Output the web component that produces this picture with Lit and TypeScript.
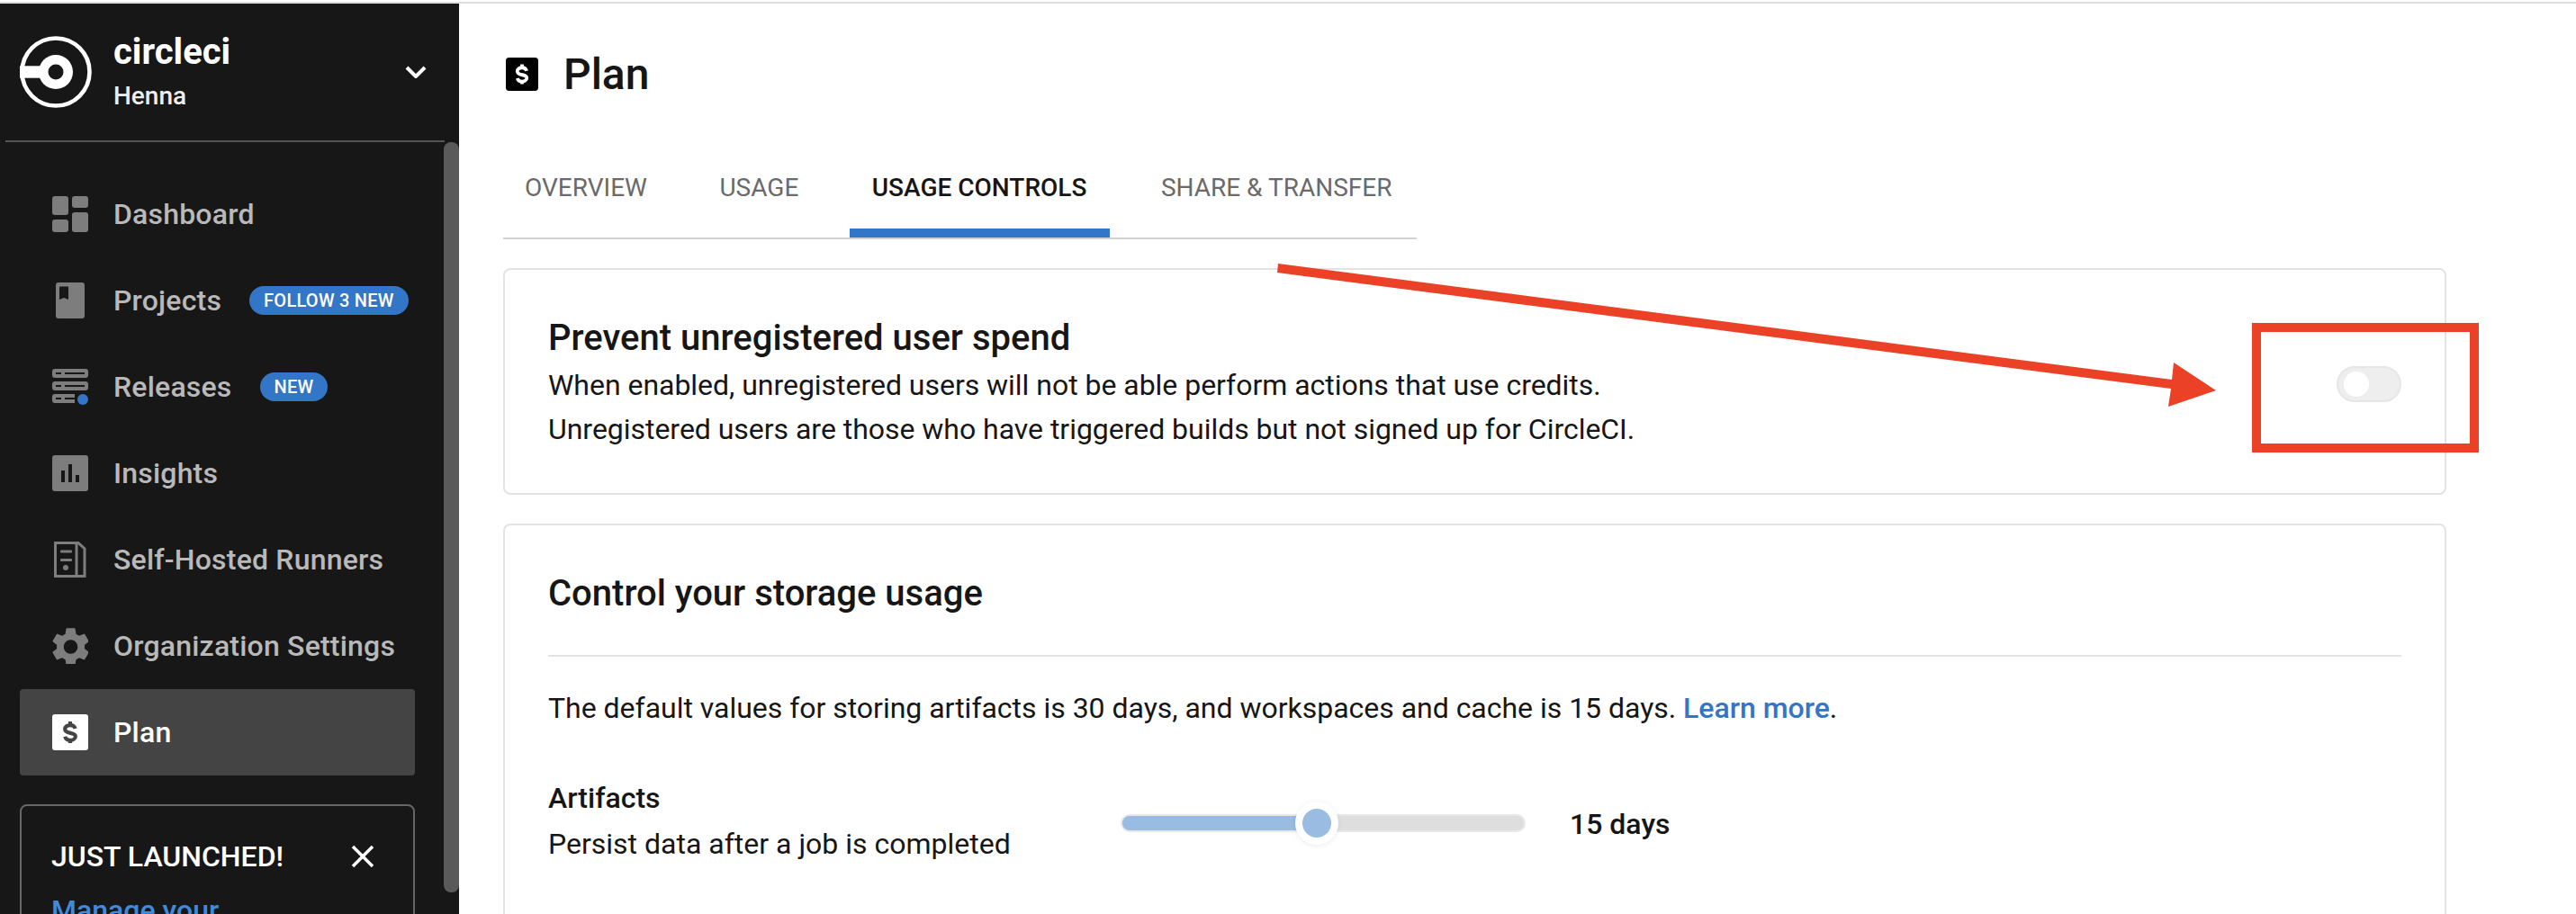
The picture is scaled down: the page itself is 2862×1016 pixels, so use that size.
import { LitElement, html, css, svg } from 'lit';
import { customElement } from 'lit/decorators.js';

const dollar = (color: string) => svg`
  <g transform="translate(2.800 2.400) scale(.86 .88)">
    <path d="M26.500 15.500c-.6-2.800-3.200-4.500-6.500-4.500-3.800 0-6.800 2-6.800 5 0 6.800 13.600 3.200 13.600 9 0 3-3 5-6.800 5-3.400 0-6-1.700-6.700-4.500"
      fill="none" stroke=${color} stroke-width="4.800" />
    <path d="M20 6.500v5M20 28.500v5" fill="none" stroke=${color} stroke-width="4.800" />
  </g>
`;

// 사이드바 아이콘 (40x40)
const icons: Record<string, unknown> = {
  dashboard: svg`
    <rect x="0" y="0" width="18" height="21" rx="3" />
    <rect x="22" y="0" width="18" height="13" rx="3" />
    <rect x="0" y="26" width="18" height="14" rx="3" />
    <rect x="22" y="18" width="18" height="22" rx="3" />`,
  projects: svg`
    <path fill-rule="evenodd" d="M7 0h26a3 3 0 0 1 3 3v34a3 3 0 0 1-3 3H7a3 3 0 0 1-3-3V3a3 3 0 0 1 3-3zM9 4.500a1 1 0 0 0-1 1V19l5-2 5 2V5.500a1 1 0 0 0-1-1z" />`,
  releases: svg`
    <path fill-rule="evenodd" d="M3 0h34a3 3 0 0 1 3 3v4a3 3 0 0 1-3 3H3a3 3 0 0 1-3-3V3a3 3 0 0 1 3-3zM4 4v2h6V4zM14 4v2h22V4z" />
    <path fill-rule="evenodd" d="M3 14h34a3 3 0 0 1 3 3v4a3 3 0 0 1-3 3H3a3 3 0 0 1-3-3v-4a3 3 0 0 1 3-3zM4 18v2h6v-2zM14 18v2h22v-2z" />
    <path fill-rule="evenodd" d="M3 28h22v10H3a3 3 0 0 1-3-3v-4a3 3 0 0 1 3-3zM4 32v2h6v-2zM14 32v2h11v-2z" />
    <circle cx="34" cy="34" r="6" fill="#3375c6" />`,
  insights: svg`
    <path fill-rule="evenodd" d="M3 0h34a3 3 0 0 1 3 3v34a3 3 0 0 1-3 3H3a3 3 0 0 1-3-3V3a3 3 0 0 1 3-3zM10 17v13h4V17zM18 10v20h4V10zM26 22v8h4v-8z" />`,
  runners: svg`
    <path d="M3.500 1.500H29l7 6.500v30.500H3.500zM27 1.500v37" fill="none" stroke="#7d7d7d" stroke-width="3" />
    <rect x="9" y="9.500" width="13" height="3" rx="1" />
    <rect x="9" y="19" width="13" height="3" rx="1" />
    <circle cx="15" cy="29" r="3" />`,
  settings: svg`
    <g transform="translate(-5.260 -4.800) scale(2.150 2.150)">
      <path d="M19.140 12.940c.04-.3.06-.61.06-.94 0-.32-.02-.64-.07-.94l2.030-1.580c.18-.14.23-.41.12-.61l-1.920-3.320c-.12-.22-.37-.29-.59-.22l-2.390.96c-.5-.38-1.030-.7-1.620-.94l-.36-2.540c-.04-.24-.24-.41-.48-.41h-3.840c-.24 0-.43.17-.47.41l-.36 2.540c-.59.24-1.130.57-1.620.94l-2.390-.96c-.22-.08-.47 0-.59.22L2.740 8.870c-.12.21-.08.47.12.61l2.030 1.580c-.05.3-.09.63-.09.94s.02.64.07.94l-2.030 1.580c-.18.14-.23.41-.12.61l1.920 3.320c.12.22.37.29.59.22l2.390-.96c.5.38 1.030.7 1.620.94l.36 2.540c.05.24.24.41.48.41h3.840c.24 0 .44-.17.47-.41l.36-2.540c.59-.24 1.130-.56 1.620-.94l2.390.96c.22.08.47 0 .59-.22l1.920-3.320c.12-.22.07-.47-.12-.61l-2.010-1.580zM12 15.600c-1.980 0-3.600-1.620-3.600-3.600s1.620-3.600 3.600-3.600 3.600 1.620 3.600 3.600-1.620 3.600-3.600 3.600z" />
    </g>`,
  plan: svg`
    <rect width="40" height="40" rx="3" fill="#fff" />
    ${dollar('#444')}`,
};

const navItems = [
  { icon: 'dashboard', label: 'Dashboard' },
  { icon: 'projects', label: 'Projects', badge: 'FOLLOW 3 NEW' },
  { icon: 'releases', label: 'Releases', badge: 'NEW' },
  { icon: 'insights', label: 'Insights' },
  { icon: 'runners', label: 'Self-Hosted Runners' },
  { icon: 'settings', label: 'Organization Settings' },
  { icon: 'plan', label: 'Plan', active: true },
];

const tabs = ['OVERVIEW', 'USAGE', 'USAGE CONTROLS', 'SHARE & TRANSFER'];

@customElement('app-root')
export class AppRoot extends LitElement {
  static styles = css`
    :host {
      display: block;
      position: relative;
      width: 2862px;
      height: 1016px;
      overflow: hidden;
      background: #fff;
      font-family: Roboto, sans-serif;
      color: #161616;
    }
    .topline {
      height: 2px;
      margin-top: 2px;
      background: #ddd;
    }
    .page {
      display: flex;
      height: 1012px;
    }

    /* 사이드바 */
    .sidebar {
      position: relative;
      flex: none;
      width: 510px;
      background: #171717;
      color: #fff;
    }
    .head {
      display: flex;
      align-items: center;
      height: 152px;
      padding: 0 36px 0 22px;
      box-sizing: border-box;
    }
    .logo {
      flex: none;
      width: 80px;
      height: 80px;
    }
    .org {
      margin-left: 25px;
      flex: 1;
    }
    .org-name {
      font-size: 40px;
      line-height: 48px;
      font-weight: 700;
      margin-top: -1px;
      margin-left: -1px;
    }
    .org-user {
      font-size: 28px;
      line-height: 36px;
      font-weight: 500;
      margin-top: 7px;
      margin-left: -1px;
      color: #eee;
    }
    .chevron {
      flex: none;
      width: 24px;
      height: 14px;
    }
    .rule {
      height: 2px;
      margin: 0 16px 0 6px;
      background: #555;
    }
    .scrollbar {
      position: absolute;
      left: 493px;
      top: 154px;
      width: 17px;
      height: 834px;
      border-radius: 8px;
      background: #5a5a5a;
    }
    nav {
      padding: 32px 49px 0 22px;
    }
    .item {
      display: flex;
      align-items: center;
      height: 96px;
      padding-left: 36px;
      border-radius: 4px;
      font-size: 32px;
      font-weight: 500;
      letter-spacing: 0.2px;
      color: #b9b9b9;
    }
    .item svg {
      flex: none;
      width: 40px;
      height: 40px;
      margin-right: 28px;
      fill: #7d7d7d;
    }
    .item.active {
      background: #444;
      color: #fff;
    }
    .badge {
      margin-left: 31px;
      height: 32px;
      padding: 0 16px;
      border-radius: 16px;
      background: #3375c6;
      color: #fff;
      font-size: 20px;
      line-height: 32px;
      letter-spacing: 0.25px;
      white-space: nowrap;
    }
    .notice {
      margin: 32px 49px 0 22px;
      height: 300px;
      padding: 38px 33px;
      box-sizing: border-box;
      border: 2px solid #666;
      border-radius: 8px;
    }
    .notice-head {
      display: flex;
      align-items: center;
      justify-content: space-between;
      padding-right: 10px;
      font-size: 32px;
      line-height: 36px;
      font-weight: 500;
    }
    .notice-head svg {
      width: 26px;
      height: 26px;
    }
    .notice-link {
      margin-top: 20px;
      font-size: 32px;
      line-height: 44px;
      font-weight: 500;
      color: #3f8adb;
    }

    /* 본문 */
    main {
      flex: 1;
      padding: 0 0 0 49px;
      min-width: 0;
    }
    .title {
      display: flex;
      align-items: center;
      gap: 28px;
      height: 150px;
      box-sizing: border-box;
      padding: 6px 0 0 3px;
      font-size: 48px;
      font-weight: 500;
    }
    .title svg {
      width: 36px;
      height: 37px;
    }
    .tabs {
      display: flex;
      gap: 32.500px;
      width: 1015px;
      border-bottom: 2px solid #d2d2d2;
    }
    .tab {
      display: flex;
      align-items: center;
      height: 110px;
      padding: 8px 24px 0;
      box-sizing: border-box;
      border-bottom: 10px solid transparent;
      font-size: 28px;
      color: #6a6a6a;
    }
    .tab.on {
      padding: 8px 26px 0 25px;
      border-bottom-color: #3375c6;
      color: #161616;
      font-weight: 500;
    }
    .card {
      width: 2159px;
      box-sizing: border-box;
      margin-top: 32px;
      border: 2px solid #e3e3e3;
      border-radius: 8px;
    }
    .spend {
      display: flex;
      align-items: center;
      justify-content: space-between;
      padding: 52px 48px 46px;
    }
    h2 {
      margin: 0;
      font-size: 40px;
      line-height: 48px;
      font-weight: 500;
    }
    .desc {
      margin-top: 4px;
      font-size: 32px;
      line-height: 49px;
      letter-spacing: -0.03px;
    }
    .toggle {
      display: flex;
      align-items: center;
      width: 72px;
      height: 40px;
      padding-left: 6px;
      box-sizing: border-box;
      border: 2px solid #e6e6e6;
      border-radius: 20px;
      background: #eee;
    }
    .toggle span {
      width: 28px;
      height: 28px;
      border-radius: 50%;
      background: #fff;
    }
    .storage {
      height: 600px;
      padding: 52px 48px 0;
    }
    .storage hr {
      margin: 44px 0 33px;
      height: 2px;
      border: 0;
      background: #e3e3e3;
    }
    .storage p {
      margin: 0;
      font-size: 32px;
      line-height: 48px;
      letter-spacing: -0.02px;
    }
    .storage a {
      color: #3375c6;
      font-weight: 500;
      text-decoration: none;
    }
    .setting {
      display: flex;
      align-items: center;
      margin-top: 56px;
    }
    .setting-text {
      flex: none;
      width: 636px;
    }
    .setting-name {
      font-size: 32px;
      line-height: 40px;
      font-weight: 500;
    }
    .setting-desc {
      margin-top: 7px;
      font-size: 32px;
      line-height: 48px;
    }
    .slider {
      position: relative;
      flex: none;
      width: 450px;
      height: 20px;
      box-sizing: border-box;
      border: 2px solid #e8e8e8;
      border-radius: 10px;
      background: #dedede;
    }
    .fill {
      height: 100%;
      border-radius: 8px 0 0 8px;
      background: #9abbe2;
    }
    .knob {
      position: absolute;
      top: 50%;
      width: 32px;
      height: 32px;
      border: 8px solid #fff;
      border-radius: 50%;
      background: #9abbe2;
      transform: translate(-50%, -50%);
      box-shadow: 0 1px 6px rgba(0, 0, 0, 0.08);
    }
    .value {
      margin-left: 49px;
      margin-top: 2px;
      font-size: 32px;
      font-weight: 500;
    }

    /* 스크린샷 위에 그린 빨간 표시 */
    .markup {
      position: absolute;
      left: 0;
      top: 0;
      pointer-events: none;
    }
  `;

  render() {
    const sliderPos = 216;
    return html`
      <div class="topline"></div>
      <div class="page">
        <aside class="sidebar">
          <div class="head">
            <svg class="logo" viewBox="0 0 80 80">
              <circle cx="40" cy="40" r="37.500" fill="none" stroke="#fff" stroke-width="4.600" />
              <rect x="0" y="33.300" width="30" height="13.400" fill="#fff" />
              <circle cx="40" cy="40" r="19" fill="#fff" />
              <circle cx="40" cy="40" r="8.500" fill="#171717" />
            </svg>
            <div class="org">
              <div class="org-name">circleci</div>
              <div class="org-user">Henna</div>
            </div>
            <svg class="chevron" viewBox="0 0 24 14">
              <path d="M2 2l10 10L22 2" fill="none" stroke="#fff" stroke-width="4" />
            </svg>
          </div>
          <div class="rule"></div>
          <div class="scrollbar"></div>
          <nav>
            ${navItems.map(
              (n) => html`
                <div class="item ${n.active ? 'active' : ''}">
                  <svg viewBox="0 0 40 40">${icons[n.icon]}</svg>
                  <span>${n.label}</span>
                  ${n.badge ? html`<span class="badge">${n.badge}</span>` : ''}
                </div>
              `
            )}
          </nav>
          <div class="notice">
            <div class="notice-head">
              <span>JUST LAUNCHED!</span>
              <svg viewBox="0 0 26 26">
                <path d="M2 2l22 22M24 2L2 24" stroke="#fff" stroke-width="3.500" fill="none" />
              </svg>
            </div>
            <div class="notice-link">Manage your</div>
          </div>
        </aside>

        <main>
          <div class="title">
            <svg viewBox="0 0 40 40" preserveAspectRatio="none">
              <rect width="40" height="40" rx="4" fill="#000" />
              ${dollar('#fff')}
            </svg>
            <span>Plan</span>
          </div>
          <div class="tabs">
            ${tabs.map((t) => html`<div class="tab ${t === 'USAGE CONTROLS' ? 'on' : ''}">${t}</div>`)}
          </div>

          <section class="card spend">
            <div>
              <h2>Prevent unregistered user spend</h2>
              <div class="desc">
                When enabled, unregistered users will not be able perform actions that use credits.<br />
                Unregistered users are those who have triggered builds but not signed up for CircleCI.
              </div>
            </div>
            <div class="toggle"><span></span></div>
          </section>

          <section class="card storage">
            <h2>Control your storage usage</h2>
            <hr />
            <p>
              The default values for storing artifacts is 30 days, and workspaces and cache is 15 days.
              <a>Learn more</a>.
            </p>
            <div class="setting">
              <div class="setting-text">
                <div class="setting-name">Artifacts</div>
                <div class="setting-desc">Persist data after a job is completed</div>
              </div>
              <div class="slider">
                <div class="fill" style="width:${sliderPos}px"></div>
                <div class="knob" style="left:${sliderPos}px"></div>
              </div>
              <div class="value">15 days</div>
            </div>
          </section>
        </main>
      </div>

      <svg class="markup" width="2862" height="1016" viewBox="0 0 2862 1016">
        <polygon fill="#eb4126" points="1420,293 2413,422 2415,403 2462,434 2409,452 2412,432 1419,303" />
        <rect x="2507" y="364" width="242" height="134" fill="none" stroke="#eb4126" stroke-width="10" />
      </svg>
    `;
  }
}
